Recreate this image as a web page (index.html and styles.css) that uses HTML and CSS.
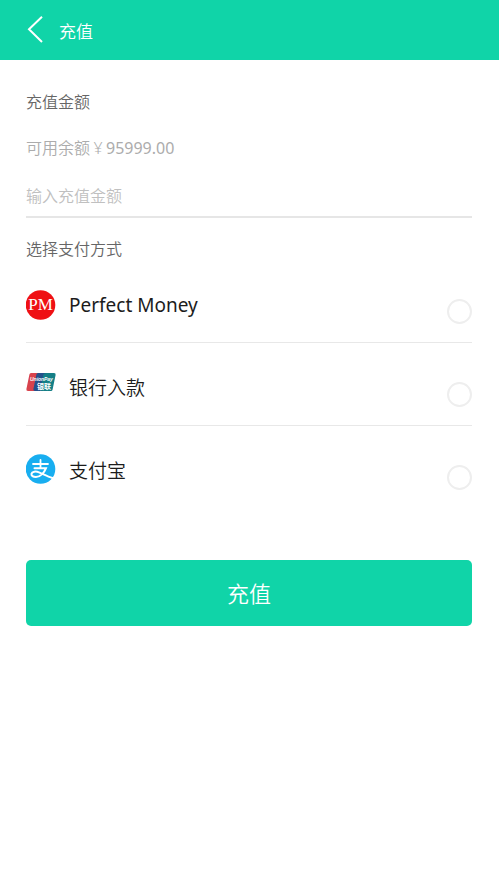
FILE: index.html
```html
<!DOCTYPE html>
<html lang="zh-CN">
<head>
<meta charset="utf-8">
<meta name="viewport" content="width=device-width, initial-scale=1">
<title>充值</title>
<link rel="stylesheet" href="styles.css">
</head>
<body>
<header class="topbar">
  <a class="back" href="#" aria-label="返回">
    <svg width="18" height="28" viewBox="0 0 18 28"><path d="M15 .8 2 13.300 15 26" fill="none" stroke="currentColor" stroke-width="2"/></svg>
  </a>
  <h1 class="title">充值</h1>
</header>
<main>
  <form class="form">
    <label class="label" for="amount">充值金额</label>
    <p class="balance">可用余额<span class="yen">¥</span><span class="figure">95999.00</span></p>
    <input class="amount" id="amount" type="text" inputmode="decimal" placeholder="输入充值金额">
    <fieldset class="methods">
      <legend class="label methods-title">选择支付方式</legend>
      <label class="method">
        <svg class="icon" width="30" height="30" viewBox="0 0 30 30" aria-hidden="true">
          <circle cx="14.500" cy="15" r="14.800" fill="#ef1014"/>
          <text class="pm" x="14.500" y="20" text-anchor="middle">PM</text>
        </svg>
        <span class="name figure">Perfect Money</span>
        <input class="radio" type="radio" name="method">
      </label>
      <label class="method">
        <svg class="icon icon-card" width="30" height="20" viewBox="0 0 30 20" aria-hidden="true">
          <path d="M5 1h9L9.500 19H2Q0 19 .4 17L3.400 2.500Q3.700 1 5 1z" fill="#d8434d"/>
          <path d="M12 1h10l-4 18H9Q7 19 7.400 17l3-14.500Q10.700 1 12 1z" fill="#24518b"/>
          <path d="M20 1h8q2 0 1.600 2l-3 14.500Q26.300 19 25 19h-9q-2 0-1.600-2l3-14.500Q17.700 1 20 1z" fill="#147f86"/>
          <text class="card-en" x="4" y="9">Union</text>
          <text class="card-en" x="18" y="9">Pay</text>
          <text class="card-cn" x="11" y="17">银联</text>
        </svg>
        <span class="name">银行入款</span>
        <input class="radio" type="radio" name="method">
      </label>
      <label class="method">
        <svg class="icon icon-round" width="30" height="30" viewBox="0 0 30 30" aria-hidden="true">
          <circle cx="14.500" cy="15" r="14.800" fill="#18aef0"/>
          <g fill="none" stroke="#fff" stroke-linecap="round">
            <path d="M7 10h15M14.500 6v8" stroke-width="1.800"/>
            <path d="M8.500 14.200h11.500c-1.500 4-5.500 8.800-10 8.800-3 0-4.900-1.300-4.500-3.300.5-2.200 4.200-2.800 7.500-1.400 4.200 1.800 8.700 4.200 13.500 5.700" stroke-width="2"/>
          </g>
        </svg>
        <span class="name">支付宝</span>
        <input class="radio" type="radio" name="method">
      </label>
    </fieldset>
    <button class="submit" type="button">充值</button>
  </form>
</main>
</body>
</html>
```
FILE: styles.css
```css
* {
  box-sizing: border-box;
}

body {
  margin: 0;
  background: #fff;
  color: #666;
  font-family: "Noto Sans", "Noto Sans CJK SC", sans-serif;
  font-size: 16px;
  font-weight: 350;
  line-height: 24px;
}

.topbar {
  display: flex;
  align-items: center;
  gap: 14px;
  height: 60px;
  padding: 0 27px;
  background: #10d4a8;
  color: #fff;
}

.back {
  display: flex;
  color: inherit;
}

.title {
  margin: 4px 0 0;
  font-size: 17px;
  font-weight: inherit;
}

.form {
  padding: 30px 27px 30px 26px;
}

.label {
  display: block;
  padding: 0;
}

.balance {
  margin: 22px 0 0;
  color: #acacac;
}

.yen {
  display: inline-block;
  width: 16px;
  text-align: center;
}

.figure {
  font-weight: 400;
}

.amount {
  display: block;
  width: 100%;
  height: 46px;
  margin-top: 12px;
  padding: 4px 0 0;
  border: 0;
  border-bottom: 2px solid #e6e6e6;
  border-radius: 0;
  background: none;
  color: #666;
  font: inherit;
}

.amount::placeholder {
  color: #c0c0c0;
  opacity: 1;
}

.methods {
  min-width: 0;
  margin: 20px 0 0;
  padding: 0;
  border: 0;
}

.methods-title {
  line-height: 22px;
}

.method {
  display: flex;
  align-items: center;
  height: 83px;
  padding-top: 8px;
  border-bottom: 1px solid #e8e8e8;
}

.method:last-child {
  height: 82px;
  border-bottom: 0;
}

.icon {
  flex: none;
  margin-right: 13px;
}

.icon-card {
  margin-bottom: 12px;
}

.icon-round {
  margin-bottom: 4px;
}

.pm {
  fill: #fff;
  font-family: "Liberation Serif", serif;
  font-size: 17px;
}

.card-en {
  fill: #fff;
  font-family: "Liberation Sans", sans-serif;
  font-size: 5px;
  font-style: italic;
  font-weight: 700;
}

.card-cn {
  fill: #fff;
  font-family: "Noto Sans CJK SC", sans-serif;
  font-size: 7px;
  font-weight: 700;
  line-height: 7px;
}

.name {
  flex: 1;
  color: #1c1c1c;
  font-size: 19px;
}

.radio {
  appearance: none;
  flex: none;
  width: 25px;
  height: 25px;
  margin: 12px 0 0;
  border: 2px solid #eee;
  border-radius: 50%;
  background: #fff;
}

.radio:checked {
  border-color: #10d4a8;
  background: #10d4a8;
}

.submit {
  display: block;
  width: 100%;
  height: 66px;
  margin-top: 52px;
  border: 0;
  border-radius: 5px;
  background: #10d4a8;
  color: #fff;
  font: inherit;
  font-size: 22px;
}
```
